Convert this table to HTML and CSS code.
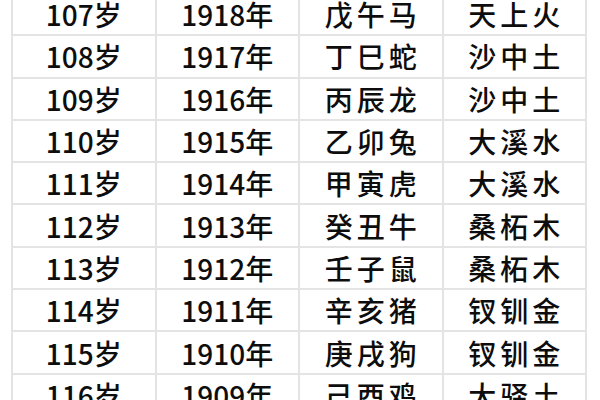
FILE: index.html
```html
<!DOCTYPE html>
<html lang="zh">
<head>
<meta charset="utf-8">
<link rel="stylesheet" href="styles.css">
</head>
<body>
<div class="page">
<table class="age-table">
<tbody>
<tr><td>107岁</td><td>1918年</td><td class="cn">戊午马</td><td class="cn">天上火</td></tr>
<tr><td>108岁</td><td>1917年</td><td class="cn">丁巳蛇</td><td class="cn">沙中土</td></tr>
<tr><td>109岁</td><td>1916年</td><td class="cn">丙辰龙</td><td class="cn">沙中土</td></tr>
<tr><td>110岁</td><td>1915年</td><td class="cn">乙卯兔</td><td class="cn">大溪水</td></tr>
<tr><td>111岁</td><td>1914年</td><td class="cn">甲寅虎</td><td class="cn">大溪水</td></tr>
<tr><td>112岁</td><td>1913年</td><td class="cn">癸丑牛</td><td class="cn">桑柘木</td></tr>
<tr><td>113岁</td><td>1912年</td><td class="cn">壬子鼠</td><td class="cn">桑柘木</td></tr>
<tr><td>114岁</td><td>1911年</td><td class="cn">辛亥猪</td><td class="cn">钗钏金</td></tr>
<tr><td>115岁</td><td>1910年</td><td class="cn">庚戌狗</td><td class="cn">钗钏金</td></tr>
<tr><td>116岁</td><td>1909年</td><td class="cn">己酉鸡</td><td class="cn">大驿土</td></tr>
</tbody>
</table>
</div>
</body>
</html>
```
FILE: styles.css
```css
html, body {
  margin: 0;
  padding: 0;
  background: #ffffff;
}
.page {
  width: 600px;
  height: 400px;
  overflow: hidden;
}
.age-table {
  margin: -8px 0 0 11px;
  width: 576px;
  border-collapse: collapse;
  table-layout: fixed;
  font-family: "Noto Sans CJK SC", "Noto Sans", sans-serif;
  font-size: 28px;
  font-weight: 500;
  color: #0d0d0d;
}
.age-table td {
  border: 2px solid #e4e4e4;
  height: 40.3px;
  padding: 0;
  text-align: center;
  vertical-align: middle;
  line-height: 40px;
}
.age-table td.cn {
  letter-spacing: 4px;
  text-indent: 4px;
}
```
